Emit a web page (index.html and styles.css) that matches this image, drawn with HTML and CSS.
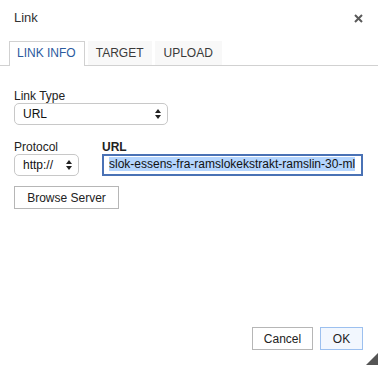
FILE: index.html
```html
<!DOCTYPE html>
<html lang="en">
<head>
    <meta charset="UTF-8">
    <meta name="viewport" content="width=device-width, initial-scale=1.0">
    <title>Link</title>
    <link rel="stylesheet" href="styles.css">
</head>
<body>
    <div class="dialog">
        <div class="dialog-title">
            <span>Link</span>
            <svg class="close" width="9" height="9" viewBox="0 0 9 9">
                <path d="M1 1 L8 8 M8 1 L1 8" stroke="#5a5a5a" stroke-width="2"/>
            </svg>
        </div>

        <div class="tabs">
            <div class="tab active">LINK INFO</div>
            <div class="tab">TARGET</div>
            <div class="tab">UPLOAD</div>
        </div>

        <div class="content">
            <div class="field">
                <div class="label">Link Type</div>
                <div class="select select-type">
                    <span>URL</span>
                    <svg width="6" height="10" viewBox="0 0 6 10"><path d="M3 0 L6 4 L0 4 Z M0 6 L6 6 L3 10 Z" fill="#222"/></svg>
                </div>
            </div>

            <div class="row">
                <div class="field">
                    <div class="label">Protocol</div>
                    <div class="select select-protocol">
                        <span>http://</span>
                        <svg width="6" height="10" viewBox="0 0 6 10"><path d="M3 0 L6 4 L0 4 Z M0 6 L6 6 L3 10 Z" fill="#222"/></svg>
                    </div>
                </div>
                <div class="field">
                    <div class="label bold">URL</div>
                    <div class="input-url"><span class="selected">slok-essens-fra-ramslokekstrakt-ramslin-30-ml</span></div>
                </div>
            </div>

            <div class="btn btn-browse">Browse Server</div>
        </div>

        <div class="footer">
            <div class="btn btn-cancel">Cancel</div>
            <div class="btn btn-ok">OK</div>
        </div>

        <div class="resizer"></div>
    </div>
</body>
</html>
```

FILE: styles.css
```css
* {
    margin: 0;
    padding: 0;
    box-sizing: border-box;
}

body {
    font-family: "Liberation Sans", Arial, sans-serif;
    font-size: 12px;
    color: #333;
    background-color: #fff;
}

.dialog {
    position: relative;
    width: 378px;
    height: 365px;
    display: flex;
    flex-direction: column;
    background-color: #fff;
}

.dialog-title {
    display: flex;
    justify-content: space-between;
    align-items: center;
    padding: 10px 15px 0 14px;
    height: 26px;
    line-height: 16px;
    font-size: 13px;
}

.close {
    margin-top: 1px;
}

/* zakladki */
.tabs {
    display: flex;
    gap: 3px;
    margin-top: 15px;
    padding-left: 9px;
    height: 25px;
    border-bottom: 1px solid #d1d1d1;
}

.tab {
    height: 24px;
    line-height: 23px;
    padding: 0 8px 0 7px;
    background-color: #f8f8f8;
    border: 1px solid transparent;
    border-bottom: none;
    color: #3a3a3a;
}

.tab.active {
    background-color: #fff;
    border-color: #d1d1d1;
    color: #2b5a9e;
    height: 25px;
}

.content {
    padding: 22px 14px 0 14px;
}

.label {
    line-height: 16px;
    height: 15px;
    color: #222;
}

.bold {
    font-weight: bold;
}

.select {
    display: flex;
    justify-content: space-between;
    align-items: center;
    height: 22px;
    border: 1px solid #c8c8c8;
    border-radius: 5px;
    padding: 0 6px 0 8px;
    color: #111;
}

.select-type {
    width: 154px;
}

.row {
    display: flex;
    gap: 23px;
    margin-top: 14px;
}

.select-protocol {
    width: 65px;
}

.input-url {
    width: 261px;
    height: 22px;
    border: 2px solid #4a72b5;
    padding: 0 0 0 5px;
    line-height: 17px;
    white-space: nowrap;
    overflow: hidden;
    color: #111;
}

.selected {
    background-color: #b4d5fe;
}

.btn {
    display: flex;
    align-items: center;
    justify-content: center;
    height: 23px;
    border: 1px solid #b6b6b6;
    background-color: #fff;
    color: #222;
}

.btn-browse {
    width: 105px;
    margin-top: 10px;
}

.footer {
    display: flex;
    justify-content: flex-end;
    gap: 7px;
    margin-top: auto;
    padding: 0 15px 15px 0;
}

.btn-cancel {
    width: 61px;
}

.btn-ok {
    width: 43px;
    border-color: #9cc0ef;
    background-color: #f2f7fe;
}

.resizer {
    position: absolute;
    right: 0;
    bottom: 0;
    width: 0;
    height: 0;
    border-left: 12px solid transparent;
    border-bottom: 12px solid #555;
}
```
